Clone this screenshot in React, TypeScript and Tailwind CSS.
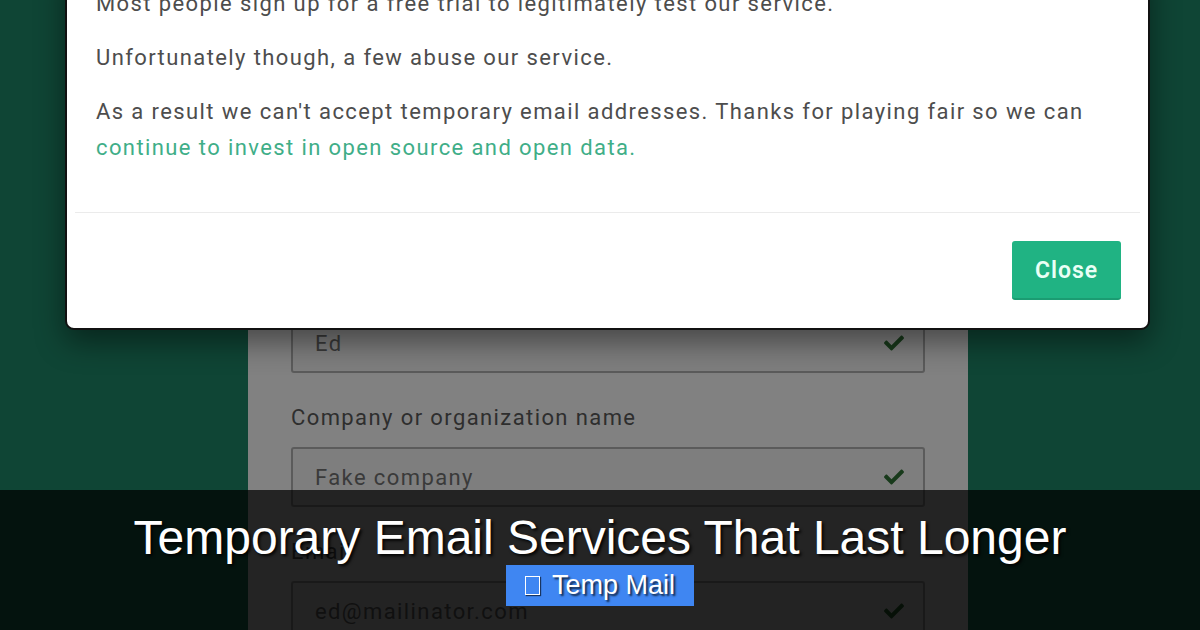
import React from "react";
import { FaCheck } from "react-icons/fa";

type Field = { label: string; value: string };

const fields: Field[] = [
    { label: "Last name", value: "Ed" },
    { label: "Company or organization name", value: "Fake company" },
    { label: "Email", value: "ed@mailinator.com" },
];

const FormField: React.FC<Field> = ({ label, value }) => (
    <div className="mb-[30px]">
        <div className="h-[30px] leading-[30px] text-[22px] text-[#2e2e2e]">{label}</div>
        <div className="mt-[14px] h-[60px] flex items-center justify-between border-2 border-[#5b5b5b] rounded-[3px] bg-[#7e7e7e] pl-[22px] pr-[17px]">
            <span className="text-[22px] text-[#3a3a3a]">{value}</span>
            <FaCheck className="text-[#183a1b] w-[24px] h-[20px]" />
        </div>
    </div>
);

const App: React.FC = () => {
    return (
        <div className="relative w-[1200px] h-[630px] overflow-hidden bg-[#0f4535] font-['Roboto',sans-serif] tracking-[1.4px]">
            {/* dimmed signup form behind the modal */}
            <div className="flex h-full pl-[248px]">
                <div className="w-[720px] h-full bg-[#818181] pt-[269px] px-[43px]">
                    {fields.map((f) => (
                        <FormField key={f.label} label={f.label} value={f.value} />
                    ))}
                </div>
            </div>

            {/* modal */}
            <div className="absolute left-[65px] top-[-40px] w-[1085px] h-[370px] bg-white border-2 border-[#111] rounded-[9px] shadow-[0_12px_30px_rgba(0,0,0,0.45)] flex flex-col">
                <div className="pt-[24px] pl-[29px] pr-[29px] pb-[46px] text-[22px] text-[#4d4d4d]">
                    <p className="leading-[36px] mb-[18px]">Most people sign up for a free trial to legitimately test our service.</p>
                    <p className="leading-[36px] mb-[18px]">Unfortunately though, a few abuse our service.</p>
                    <p className="leading-[36px]">
                        As a result we can't accept temporary email addresses. Thanks for playing fair so we can{" "}
                        <span className="text-[#3fae88]">continue to invest in open source and open data.</span>
                    </p>
                </div>
                <div className="mx-[8px] h-px bg-[#ebebeb]" />
                <div className="flex justify-end pt-[28px] pr-[27px]">
                    <button className="w-[109px] h-[59px] pt-[4px] rounded-[3px] bg-[#20b383] text-[#e9fff6] text-[23px] font-semibold tracking-[1px] border-b-2 border-[#1b9c72]">
                        Close
                    </button>
                </div>
            </div>

            {/* title banner */}
            <div className="absolute left-0 right-0 bottom-0 h-[140px] bg-black/[0.72] flex flex-col items-center pt-[24px] font-['Liberation_Sans',Arial,sans-serif] tracking-normal">
                <h1 className="text-[48px] leading-[48px] text-white [text-shadow:2px_2px_3px_rgba(0,0,0,0.9)]">
                    Temporary Email Services That Last Longer
                </h1>
                <div className="mt-[3px] h-[41px] flex items-center bg-[#3f86f2] pl-[19px] pr-[19px] text-white text-[27px] [text-shadow:2px_2px_2px_rgba(0,0,0,0.7)]">
                    <span className="inline-block w-[15px] h-[19px] border-[1.5px] border-white mr-[12px] shadow-[1px_1px_1px_rgba(0,0,0,0.6)]" />
                    <span>Temp Mail</span>
                </div>
            </div>
        </div>
    );
};

export default App;
